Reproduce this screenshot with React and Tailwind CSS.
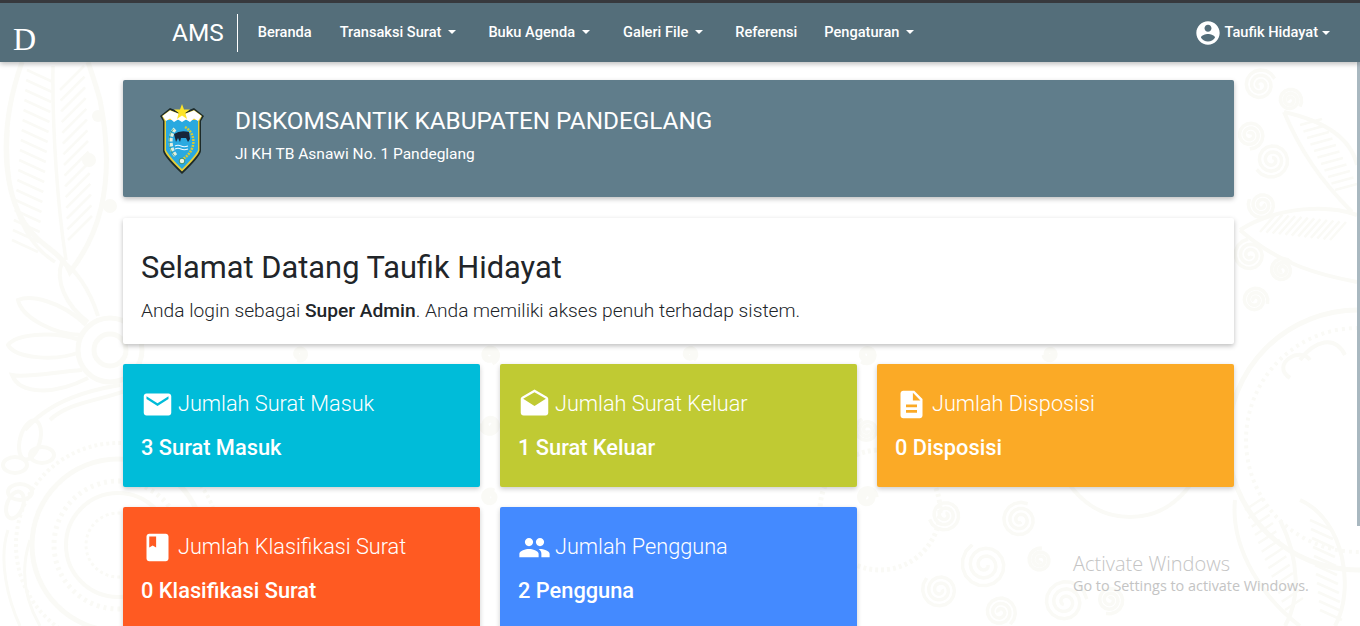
const navItems = [
  { label: 'Beranda', w: 'mr-[28px]' },
  { label: 'Transaksi Surat', caret: true, w: 'mr-[32px]' },
  { label: 'Buku Agenda', caret: true, w: 'mr-[33px]' },
  { label: 'Galeri File', caret: true, w: 'mr-[32px]' },
  { label: 'Referensi', w: 'mr-[27px]' },
  { label: 'Pengaturan', caret: true, w: '' },
]

const icons = {
  email: 'M20 4H4c-1.1 0-1.99.9-1.99 2L2 18c0 1.1.9 2 2 2h16c1.1 0 2-.9 2-2V6c0-1.1-.9-2-2-2zm0 4l-8 5-8-5V6l8 5 8-5v2z',
  drafts: 'M21.99 8c0-.72-.37-1.35-.94-1.7L12 1 2.95 6.3C2.38 6.65 2 7.28 2 8v10c0 1.1.9 2 2 2h16c1.1 0 2-.9 2-2l-.01-10zM12 13L3.74 7.84 12 3l8.26 4.84L12 13z',
  description: 'M14 2H6c-1.1 0-1.99.9-1.99 2L4 20c0 1.1.89 2 1.99 2H18c1.1 0 2-.9 2-2V8l-6-6zm2 16H8v-2h8v2zm0-4H8v-2h8v2zm-3-5V3.5L18.5 9H13z',
  book: 'M18 2H6c-1.1 0-2 .9-2 2v16c0 1.1.9 2 2 2h12c1.1 0 2-.9 2-2V4c0-1.1-.9-2-2-2zM6 4h5v8l-2.5-1.5L6 12V4z',
  people: 'M16 11c1.66 0 2.99-1.34 2.99-3S17.66 5 16 5c-1.66 0-3 1.34-3 3s1.34 3 3 3zm-8 0c1.66 0 2.99-1.34 2.99-3S9.66 5 8 5C6.34 5 5 6.34 5 8s1.34 3 3 3zm0 2c-2.33 0-7 1.17-7 3.5V19h14v-2.5c0-2.33-4.67-3.5-7-3.5zm8 0c-.29 0-.62.02-.97.05 1.16.84 1.97 1.97 1.97 3.45V19h6v-2.5c0-2.33-4.67-3.5-7-3.5z',
  account: 'M12 2C6.48 2 2 6.48 2 12s4.48 10 10 10 10-4.48 10-10S17.52 2 12 2zm0 3c1.66 0 3 1.34 3 3s-1.34 3-3 3-3-1.34-3-3 1.34-3 3-3zm0 14.2c-2.5 0-4.71-1.28-6-3.22.03-1.99 4-3.08 6-3.08 1.99 0 5.97 1.09 6 3.08-1.29 1.94-3.5 3.22-6 3.22z',
}

const cards = [
  { title: 'Jumlah Surat Masuk', value: '3 Surat Masuk', icon: 'email', bg: 'bg-[#00bcd9]' },
  { title: 'Jumlah Surat Keluar', value: '1 Surat Keluar', icon: 'drafts', bg: 'bg-[#c0ca33]' },
  { title: 'Jumlah Disposisi', value: '0 Disposisi', icon: 'description', bg: 'bg-[#fbaa26]' },
  { title: 'Jumlah Klasifikasi Surat', value: '0 Klasifikasi Surat', icon: 'book', bg: 'bg-[#ff5a22]' },
  { title: 'Jumlah Pengguna', value: '2 Pengguna', icon: 'people', bg: 'bg-[#448aff]' },
]

function Icon({ name, className }) {
  return (
    <svg viewBox="0 0 24 24" fill="currentColor" className={className}>
      <path d={icons[name]} />
    </svg>
  )
}

function Caret() {
  return <span className="ml-[7px] inline-block border-x-[4.5px] border-t-[4px] border-x-transparent border-t-white" />
}

function spiral(cx, cy, r, start = 0) {
  let d = ''
  for (let i = 0; i <= 44; i++) {
    const a = start + i * 0.38
    const rr = r * (0.12 + (0.88 * i) / 44)
    d += `${i ? ' L' : 'M'}${(cx + rr * Math.cos(a)).toFixed(1)} ${(cy + rr * Math.sin(a)).toFixed(1)}`
  }
  return d
}

function ribs(x1, y1, x2, y2, n, dx, dy) {
  let d = ''
  for (let i = 0; i <= n; i++) {
    const t = i / n
    const x = x1 + (x2 - x1) * t
    const y = y1 + (y2 - y1) * t
    d += `M${x.toFixed(1)} ${y.toFixed(1)} l${dx} ${dy} `
  }
  return d
}

// faint batik background
function Batik() {
  const spirals = [
    [985, 565, 24], [1020, 520, 18], [1065, 602, 22], [1000, 612, 16], [1110, 600, 14], [945, 515, 16], [940, 590, 18], [1040, 560, 12],
    [1260, 85, 16], [1290, 100, 12], [1250, 135, 14], [1272, 160, 18], [1262, 205, 14], [1250, 255, 16], [1282, 270, 12], [1255, 300, 13],
    [490, 355, 9], [867, 355, 9], [490, 425, 10], [867, 430, 12], [490, 497, 8], [867, 497, 10], [690, 354, 7], [300, 354, 7], [1050, 354, 7],
  ]
  return (
    <svg viewBox="0 0 1360 626" className="absolute inset-0 h-full w-full" fill="none" stroke="#fafaf6" strokeWidth="3.5">
      {spirals.map(([x, y, r], i) => (
        <path key={i} d={spiral(x, y, r, i)} />
      ))}

      {/* leaf, top left */}
      <path d="M22 62 C-2 130 -2 210 45 245 C58 255 66 262 70 272 C95 240 118 190 100 100 C96 85 92 74 88 62" strokeWidth="5" />
      <path d="M8 130 C4 190 20 240 55 262" />
      <path d="M53 66 C52 130 58 210 66 260" />
      <path d={ribs(27, 70, 12, 240, 17, 26, 12)} strokeWidth="2.5" />
      <path d={ribs(60, 90, 68, 240, 14, 24, -24)} strokeWidth="2.5" />
      <circle cx="98" cy="116" r="6" fill="#fafaf6" stroke="none" />
      <circle cx="89" cy="160" r="7" fill="#fafaf6" stroke="none" />
      <circle cx="110" cy="206" r="7" fill="#fafaf6" stroke="none" />

      {/* flower and petals, left */}
      <circle cx="110" cy="350" r="32" strokeWidth="5" />
      <circle cx="110" cy="350" r="16" strokeWidth="5" />
      <path d="M80 340 C50 330 15 335 8 345 C15 358 55 362 80 352" strokeWidth="4" />
      <path d="M86 325 C60 300 30 295 18 300 C22 318 55 335 82 335" strokeWidth="4" />
      <path d="M98 316 C90 290 75 268 62 262 C55 280 65 305 88 322" strokeWidth="4" />
      <path d="M82 370 C55 372 25 378 12 375 C20 395 55 395 88 378" strokeWidth="4" />
      <path d="M120 385 C90 390 50 400 25 430 M140 385 C110 400 70 400 50 420" strokeWidth="4" />
      <ellipse cx="30" cy="440" rx="10" ry="20" transform="rotate(15 30 440)" strokeWidth="4" />
      <ellipse cx="15" cy="465" rx="12" ry="8" strokeWidth="4" />
      <ellipse cx="42" cy="455" rx="12" ry="8" strokeWidth="4" />
      <ellipse cx="20" cy="492" rx="12" ry="8" strokeWidth="4" />
      <ellipse cx="15" cy="505" rx="8" ry="14" transform="rotate(20 15 505)" strokeWidth="4" />

      {/* concentric swirls, lower left */}
      <circle cx="118" cy="545" r="32" strokeWidth="3" strokeDasharray="3 3" />
      <circle cx="118" cy="545" r="52" strokeWidth="4" />
      <circle cx="118" cy="545" r="64" strokeWidth="5" strokeDasharray="3 4" />
      <circle cx="118" cy="545" r="86" strokeWidth="5" />
      <circle cx="118" cy="545" r="102" strokeWidth="4" strokeDasharray="3 3" />
      <path d="M8 530 C-2 560 8 600 20 626 M30 540 C20 570 25 600 40 626" strokeWidth="3" />

      {/* leaves and arcs, right */}
      <path d="M1284 112 C1320 120 1350 135 1357 165 M1284 112 C1300 150 1320 180 1352 212" strokeWidth="4" />
      <path d={ribs(1300, 125, 1335, 190, 10, 22, -6)} strokeWidth="2.5" />
      <path d="M1240 230 C1280 205 1330 205 1357 215 M1240 230 C1280 265 1320 275 1357 282" strokeWidth="4" />
      <path d={ribs(1260, 232, 1330, 240, 11, 16, -18)} strokeWidth="2.5" />
      <circle cx="1358" cy="440" r="130" strokeWidth="5" />
      <circle cx="1358" cy="440" r="112" strokeWidth="4" strokeDasharray="3 4" />
      <path d="M1300 360 C1315 340 1335 335 1345 355 M1290 378 C1270 365 1300 345 1310 360" strokeWidth="4" />

      {/* lower right */}
      <circle cx="1130" cy="445" r="72" strokeWidth="4" />
      <circle cx="880" cy="510" r="60" strokeWidth="5" strokeDasharray="3 3" />
      <path d="M1235 500 C1230 550 1265 600 1300 626 M1280 520 C1300 560 1300 600 1285 626 M1300 500 C1345 520 1355 590 1335 626" strokeWidth="4" />
      <path d={ribs(1245, 510, 1285, 610, 12, 18, -12)} strokeWidth="2.5" />
      <path d={ribs(1310, 520, 1320, 610, 10, 22, 10)} strokeWidth="2.5" />
    </svg>
  )
}

// regency crest, drawn small
function Crest() {
  return (
    <svg viewBox="0 0 44 70" className="ml-[37px] h-[70px] w-[44px] shrink-0">
      <path d="M22 9 L34 4 L44 12 L41 17 L41 47 Q40 53 22 70 Q4 53 3 47 L3 17 L0 12 L10 4 Z" fill="#1d2b2a" />
      <path d="M22 11 L34 6 L42 12 L39.5 17 L39.5 46.5 Q38 52 22 67.5 Q6 52 4.5 46.5 L4.5 17 L2 12 L10 6 Z" fill="#e6cf3a" />
      <path d="M6 16 L38 16 L38 46 Q36 51 22 65 Q8 51 6 46 Z" fill="#29a9e0" />
      <path d="M2.5 12 L10 6.5 L22 11 L34 6.5 L41.5 12 L38 17 L34 14.5 L30 18 L26 15.5 L22 18 L18 15.5 L14 18 L10 14.5 L6 17 Z" fill="#fff" />
      <path d="M22 0 L24 5.5 L30 5.5 L25.3 9 L27 15 L22 11.4 L17 15 L18.7 9 L14 5.5 L20 5.5 Z" fill="#fde428" />
      <path d="M25 23 C36 29 37 46 23 55" fill="none" stroke="#d8cb35" strokeWidth="2.5" strokeDasharray="2 1" />
      <path d="M15 25 C9 31 9 44 16 52" fill="none" stroke="#e0efe0" strokeWidth="4" strokeDasharray="3.5 1.5" />
      <path d="M15 25 C9 31 9 44 16 52" fill="none" stroke="#2e8f5e" strokeWidth="0.7" transform="translate(-1.5 0)" />
      <path d="M14 30 Q20 26 29 28 L30 35 L28 38 L26 34 L21 34 L20 38 L18 34 L16 38 Z" fill="#17263a" />
      <path d="M15 42 q3 -1.5 6 0 t7 0 M15 45 q3 -1.5 6 0 t7 0" fill="none" stroke="#eef8ff" strokeWidth="1.1" />
      <circle cx="22" cy="57" r="2.8" fill="#e6f2e2" stroke="#2a7d4f" strokeWidth="0.8" />
    </svg>
  )
}

function StatCard({ card }) {
  return (
    <div className={`${card.bg} h-[123px] rounded-[2px] px-[18px] pt-[23px] text-white shadow-[0_2px_5px_rgba(0,0,0,0.2)]`}>
      <div className="flex h-[34px] items-center">
        <Icon name={card.icon} className="-ml-[0.5px] h-[33px] w-[33px] shrink-0" />
        <span className="ml-[4.5px] text-[21.7px] leading-[34px] font-light">{card.title}</span>
      </div>
      <p className="mt-[10px] text-[21.8px] leading-[34px] font-medium">{card.value}</p>
    </div>
  )
}

export default function App() {
  return (
    <div className="relative h-[626px] overflow-hidden bg-white font-['Roboto',sans-serif]">
      <Batik />

      <header className="relative z-10 h-[62px] border-t-[3px] border-[#37393d] bg-[#546e7a] text-white shadow-[0_2px_5px_rgba(0,0,0,0.26)]">
        <nav className="flex h-[59px] items-center pr-[30px]">
          <span className="mt-[13px] ml-[13px] w-[159px] font-['Liberation_Serif',serif] text-[32px] leading-none">D</span>
          <span className="mt-[1px] text-[24.4px] leading-none">AMS</span>
          <span className="mx-[13px] h-[38px] w-px bg-white" />
          <ul className="ml-[7px] flex items-center text-[14.6px] font-medium">
            {navItems.map(item => (
              <li key={item.label} className={`flex items-center ${item.w}`}>
                {item.label}
                {item.caret && <Caret />}
              </li>
            ))}
          </ul>
          <div className="ml-auto flex items-center text-[14.6px] font-medium">
            <Icon name="account" className="mr-[2px] h-[28px] w-[28px]" />
            Taufik Hidayat
            <span className="ml-[4px] inline-block border-x-[4.5px] border-t-[4px] border-x-transparent border-t-white" />
          </div>
        </nav>
      </header>

      <main className="relative mt-[18px] ml-[123px] w-[1111px]">
        <section className="flex h-[117px] items-center rounded-[2px] bg-[#607d8b] text-white shadow-[0_2px_5px_rgba(0,0,0,0.26)]">
          <Crest />
          <div className="mb-[7px] ml-[31px]">
            <h1 className="text-[24.3px] leading-[30px] font-normal">DISKOMSANTIK KABUPATEN PANDEGLANG</h1>
            <p className="mt-[8px] text-[15.5px] leading-[20px]">Jl KH TB Asnawi No. 1 Pandeglang</p>
          </div>
        </section>

        <section className="mt-[21px] h-[126px] rounded-[2px] bg-white px-[18px] pt-[32px] text-[#212529] shadow-[0_2px_5px_rgba(0,0,0,0.26)]">
          <h2 className="text-[30.8px] leading-[36px] font-normal">Selamat Datang Taufik Hidayat</h2>
          <p className="mt-[13px] text-[19.2px] leading-[24px] font-light">
            Anda login sebagai <strong className="font-medium">Super Admin</strong>. Anda memiliki akses penuh terhadap sistem.
          </p>
        </section>

        <section className="mt-[20px] grid grid-cols-3 gap-5">
          {cards.map(card => (
            <StatCard key={card.title} card={card} />
          ))}
        </section>
      </main>

      <div className="absolute top-[552px] left-[1073px] font-['Open_Sans',sans-serif] text-[#c4c4c4]">
        <p className="text-[20px] leading-[24px] font-light">Activate Windows</p>
        <p className="mt-[1px] text-[14.4px] leading-[18px]">Go to Settings to activate Windows.</p>
      </div>

      <div className="absolute top-[3px] right-0 h-[523px] w-[3px] bg-[#a9b8c0]" />
    </div>
  )
}
